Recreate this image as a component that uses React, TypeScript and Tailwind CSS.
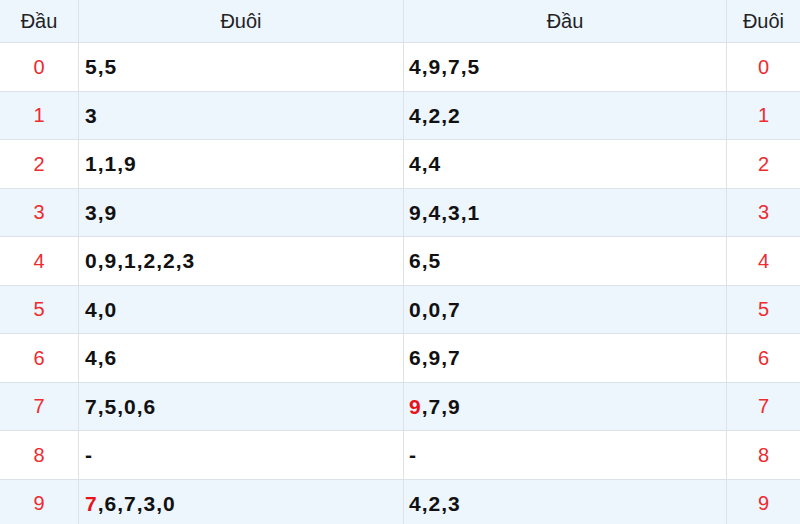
const rows: [string, string, string, string][] = [
  ['0', '5,5', '4,9,7,5', '0'],
  ['1', '3', '4,2,2', '1'],
  ['2', '1,1,9', '4,4', '2'],
  ['3', '3,9', '9,4,3,1', '3'],
  ['4', '0,9,1,2,2,3', '6,5', '4'],
  ['5', '4,0', '0,0,7', '5'],
  ['6', '4,6', '6,9,7', '6'],
  ['7', '7,5,0,6', '*9,7,9', '7'],
  ['8', '-', '-', '8'],
  ['9', '*7,6,7,3,0', '4,2,3', '9'],
];

// leading * marks the first digit as highlighted
function Nums({ v }: { v: string }) {
  if (v.startsWith('*')) {
    return (
      <>
        <span className="text-[#e8141b]">{v[1]}</span>
        {v.slice(2)}
      </>
    );
  }
  return <>{v}</>;
}

export default function App() {
  return (
    <div className="w-[800px] h-[524px] overflow-hidden bg-white font-['Liberation_Sans',Arial,sans-serif]">
      <div className="grid grid-cols-[79px_325px_323px_73px]">
        <div className="h-[43px] bg-[#edf5fd] border-r border-b border-[#dce2e8] flex items-center justify-center text-[20px] text-[#222]">Đầu</div>
        <div className="h-[43px] bg-[#edf5fd] border-r border-b border-[#dce2e8] flex items-center justify-center text-[20px] text-[#222]">Đuôi</div>
        <div className="h-[43px] bg-[#edf5fd] border-r border-b border-[#dce2e8] flex items-center justify-center text-[20px] text-[#222]">Đầu</div>
        <div className="h-[43px] bg-[#edf5fd] border-b border-[#dce2e8] flex items-center justify-center text-[20px] text-[#222]">Đuôi</div>
        {rows.map(([a, b, c, d], i) => {
          const bg = i % 2 === 1 ? 'bg-[#edf5fd]' : 'bg-white';
          return (
            <div key={i} className="contents">
              <div className={`h-[48.5px] ${bg} border-r border-b border-[#dce2e8] flex items-center justify-center text-[20px] text-[#ee2b2f]`}>{a}</div>
              <div className={`h-[48.5px] ${bg} border-r border-b border-[#dce2e8] flex items-center pl-[6px] text-[21px] tracking-[1px] font-bold text-[#111]`}><Nums v={b} /></div>
              <div className={`h-[48.5px] ${bg} border-r border-b border-[#dce2e8] flex items-center pl-[5px] text-[21px] tracking-[1px] font-bold text-[#111]`}><Nums v={c} /></div>
              <div className={`h-[48.5px] ${bg} border-b border-[#dce2e8] flex items-center justify-center text-[20px] text-[#ee2b2f]`}>{d}</div>
            </div>
          );
        })}
      </div>
    </div>
  );
}
